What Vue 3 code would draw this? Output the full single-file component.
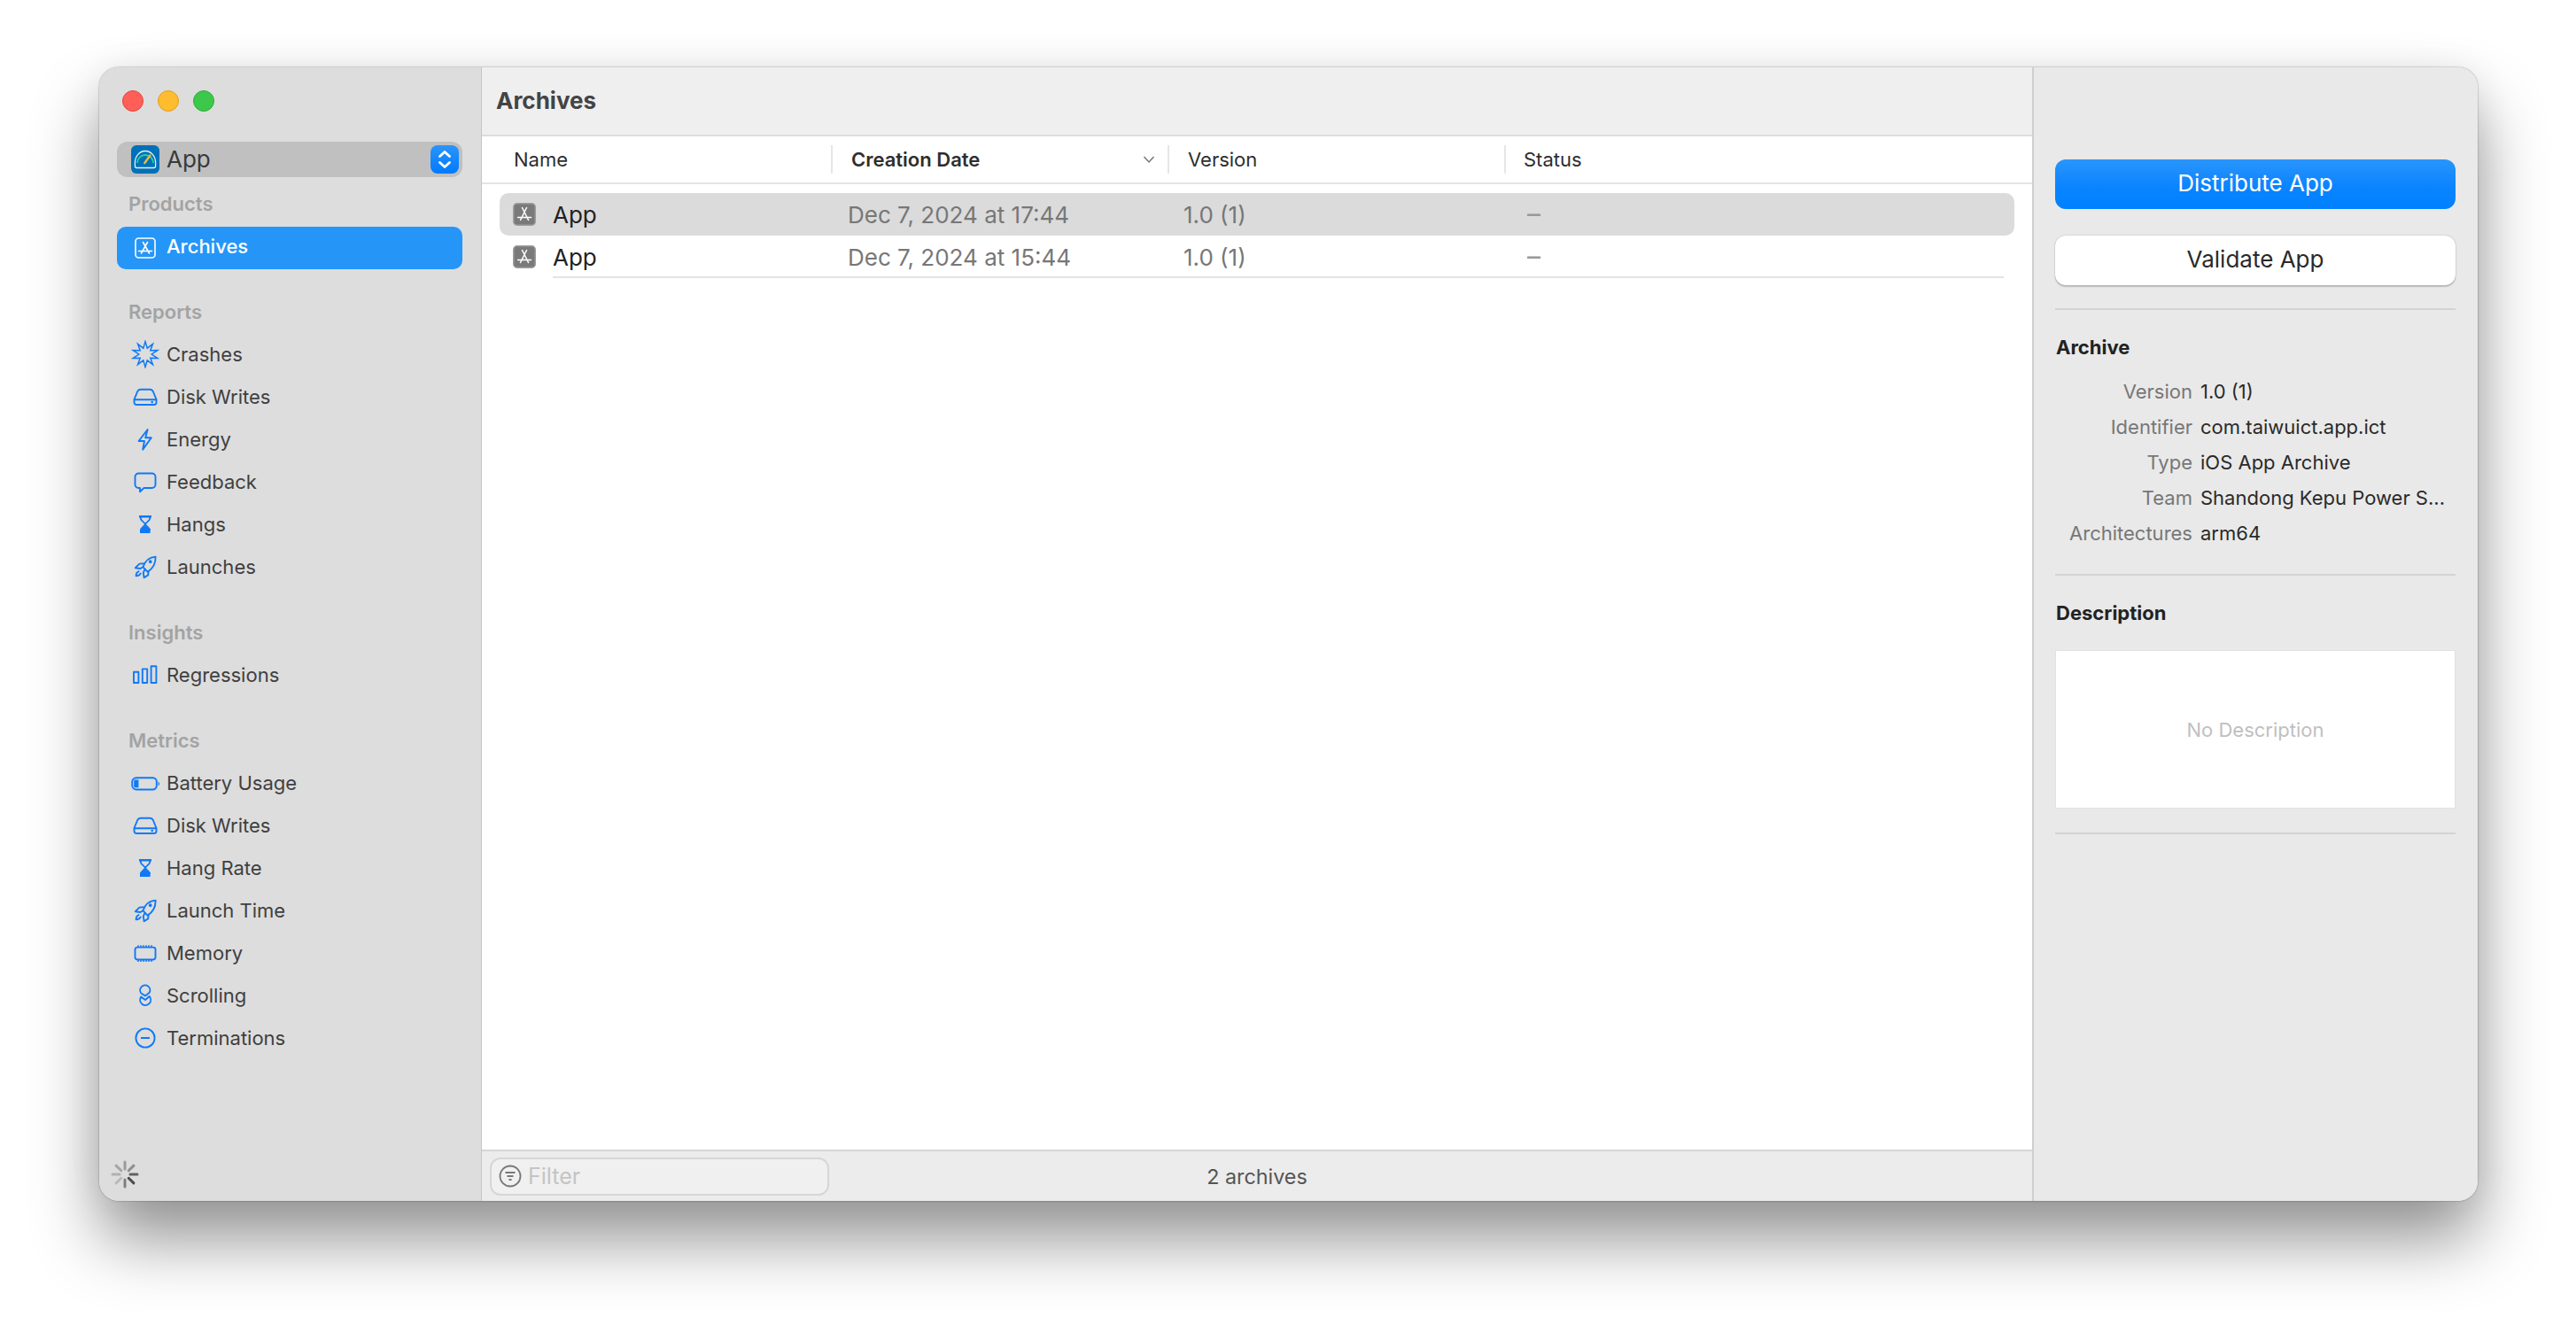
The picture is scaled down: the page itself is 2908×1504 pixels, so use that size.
<script setup>
const spikes = 10
const burst = Array.from({ length: spikes * 2 }, (_, i) => {
  const r = i % 2 ? 7.2 : 14.4
  const a = (Math.PI * i) / spikes - Math.PI / 2
  return `${(16 + r * Math.cos(a)).toFixed(2)},${(16 + r * Math.sin(a)).toFixed(2)}`
}).join(' ')

const icons = {
  crash: [{ d: `M${burst}Z`, slim: true }],
  disk: [
    { d: 'M3.5 19 7.2 10Q8.2 7.8 10.5 7.8H21.5Q23.8 7.8 24.8 10L28.5 19V22.2Q28.5 25 25.7 25H6.3Q3.5 25 3.5 22.2ZM3.5 19.2H28.5' },
    { d: 'M25 22a1.3 1.3 0 1 1-2.6 0a1.3 1.3 0 1 1 2.6 0Z', fill: true }
  ],
  bolt: [{ d: 'M18.6 5 8.6 18H15L13.2 27.6 22.8 14.2H16.2Z' }],
  bubble: [{ d: 'M8.5 6.5H23.5A4 4 0 0 1 27.5 10.5V19A4 4 0 0 1 23.5 23H14.5L10 27.2V23H8.5A4 4 0 0 1 4.5 19V10.5A4 4 0 0 1 8.5 6.5Z' }],
  hourglass: [
    { d: 'M9.5 7H22.5M10.8 7V9.5C10.8 12 15.8 14 15.8 16C15.8 18 10.8 20 10.8 23M21.2 7V9.5C21.2 12 16.2 14 16.2 16C16.2 18 21.2 20 21.2 23' },
    { d: 'M9 6H23V8.4H9ZM16 17.5 21.6 22.5V26H10V22.5Z', fill: true }
  ],
  rocket: [
    { d: 'M27.6 4.6C27.8 12 24.6 18 18.6 21.6L13.4 16.2C15.8 9.6 20.6 5 27.6 4.6Z' },
    { d: 'M23.6 10.2a1.9 1.9 0 1 1-3.8 0a1.9 1.9 0 1 1 3.8 0Z', fill: true },
    { d: 'M14.6 12.2 9.4 12.6 4.8 17.2 10.4 18 13.2 16.4M19.6 20.8 19.2 25.4 14.6 28.2 13.8 22.6 15.4 19' },
    { d: 'M9.2 20.8Q5.6 22 5.6 26.2Q9.6 26.2 11 22.8' }
  ],
  bars: [{ d: 'M3 12.8H8.4V25H3ZM12.8 9.4H18.2V25H12.8ZM22.6 6.2H28.4V25H22.6Z' }],
  battery: [
    { d: 'M6 10.2H24.5A4.3 4.3 0 0 1 28.8 14.5V19.2A4.3 4.3 0 0 1 24.5 23.5H6A4.8 4.8 0 0 1 1.2 18.7V15A4.8 4.8 0 0 1 6 10.2Z' },
    { d: 'M4.5 12.6H8.4V21.2H4.5Q3.2 21.2 3.2 19.9V13.9Q3.2 12.6 4.5 12.6ZM30.6 14.4Q32 15 32 16.9T30.6 19.4Z', fill: true }
  ],
  memory: [
    { d: 'M7 9.6H25A2.5 2.5 0 0 1 27.5 12.1V21A2.5 2.5 0 0 1 25 23.5H7A2.5 2.5 0 0 1 4.5 21V12.1A2.5 2.5 0 0 1 7 9.6Z' },
    { d: 'M8 7.2V9.6M11 7.2V9.6M14 7.2V9.6M17 7.2V9.6M20 7.2V9.6M23 7.2V9.6M8 23.5V26M11 23.5V26M14 23.5V26M17 23.5V26M20 23.5V26M23 23.5V26', thin: true }
  ],
  scroll: [
    { d: 'M11.6 13.8A5.6 5.6 0 1 1 20.7 12.8L16 16.4Z' },
    { d: 'M11.2 17.6 16 21 20.6 17A6 6 0 1 1 11.2 17.6Z' }
  ],
  minus: [{ d: 'M26.6 16A10.6 10.6 0 1 1 5.4 16A10.6 10.6 0 1 1 26.6 16ZM11 16H21' }]
}

const sections = [
  { title: 'Reports', items: [['Crashes', 'crash'], ['Disk Writes', 'disk'], ['Energy', 'bolt'], ['Feedback', 'bubble'], ['Hangs', 'hourglass'], ['Launches', 'rocket']] },
  { title: 'Insights', items: [['Regressions', 'bars']] },
  { title: 'Metrics', items: [['Battery Usage', 'battery'], ['Disk Writes', 'disk'], ['Hang Rate', 'hourglass'], ['Launch Time', 'rocket'], ['Memory', 'memory'], ['Scrolling', 'scroll'], ['Terminations', 'minus']] }
]

const spokes = [
  { a: 0, o: 0.38 }, { a: 45, o: 0.45 }, { a: 90, o: 0.72 }, { a: 135, o: 0.85 },
  { a: 180, o: 0.55 }, { a: 225, o: 0.2 }, { a: 270, o: 0.26 }, { a: 315, o: 0.32 }
]

const rows = [
  { date: 'Dec 7, 2024 at 17:44', selected: true },
  { date: 'Dec 7, 2024 at 15:44', selected: false }
]

const details = [
  ['Version', '1.0 (1)'],
  ['Identifier', 'com.taiwuict.app.ict'],
  ['Type', 'iOS App Archive'],
  ['Team', 'Shandong Kepu Power S...'],
  ['Architectures', 'arm64']
]
</script>

<template>
  <div class="page">
    <div class="window">
      <aside class="sidebar">
        <div class="lights">
          <span class="light red"></span>
          <span class="light yellow"></span>
          <span class="light green"></span>
        </div>
        <div class="picker">
          <svg class="app-icon" viewBox="0 0 32 32">
            <rect width="32" height="32" rx="6" fill="#0071b8" />
            <path d="M4.4 23.5V19.5A11.6 13 0 0 1 27.6 19.5V23.5Q27.6 25.5 25.6 25.5H6.4Q4.4 25.5 4.4 23.5Z" fill="none" stroke="#e6f2f8" stroke-width="1.3" />
            <path d="M7 20A9 9 0 0 1 25 20" fill="none" stroke="#22d39a" stroke-width="1.8" />
            <path d="M15.3 20 21.5 11.5" stroke="#f4b73a" stroke-width="2.4" stroke-linecap="round" />
          </svg>
          <span class="picker-label">App</span>
          <span class="stepper">
            <svg viewBox="0 0 32 32" width="32" height="32">
              <path d="M10.5 12.5 16 7.5 21.5 12.5M10.5 19.5 16 24.5 21.5 19.5" fill="none" stroke="#fff" stroke-width="2.8" stroke-linecap="round" stroke-linejoin="round" />
            </svg>
          </span>
        </div>

        <div class="heading first">Products</div>
        <div class="item active">
          <svg class="icon" viewBox="0 0 32 32">
            <rect x="5" y="5" width="22" height="22" rx="3.5" fill="none" stroke="#fff" stroke-width="1.6" />
            <path d="M13.5 9.5 20.5 22M18.5 9.5 11.5 22M8.5 19.5H23.5" fill="none" stroke="#fff" stroke-width="1.6" stroke-linecap="round" />
          </svg>
          <span class="active-label">Archives</span>
        </div>

        <section v-for="section in sections" :key="section.title" class="section">
          <div class="heading">{{ section.title }}</div>
          <div v-for="[label, icon] in section.items" :key="label" class="item">
            <svg class="icon" viewBox="0 0 32 32">
              <path
                v-for="(part, i) in icons[icon]"
                :key="i"
                :d="part.d"
                :class="part.fill ? 'ic-fill' : part.thin || part.slim ? 'ic-thin' : 'ic-line'"
              />
            </svg>
            <span>{{ label }}</span>
          </div>
        </section>

        <div class="spinner-wrap">
          <svg class="spinner" viewBox="0 0 32 32">
            <line
              v-for="s in spokes"
              :key="s.a"
              x1="16" y1="2" x2="16" y2="10"
              stroke="#333"
              stroke-width="3"
              stroke-linecap="round"
              :opacity="s.o"
              :transform="`rotate(${s.a} 16 16)`"
            />
          </svg>
        </div>
      </aside>

      <main class="main">
        <header class="title-bar">Archives</header>
        <div class="table">
          <div class="thead">
            <div class="th name">Name</div>
            <div class="th date">
              <span>Creation Date</span>
              <svg class="sort" viewBox="0 0 14 10" width="14" height="10">
                <path d="M1.5 2 7 8 12.5 2" fill="none" stroke="#777" stroke-width="1.5" />
              </svg>
            </div>
            <div class="th">Version</div>
            <div class="th status">Status</div>
          </div>
          <div class="rows">
            <div v-for="row in rows" :key="row.date" class="row" :class="{ selected: row.selected }">
              <div class="cell-name">
                <svg class="archive-icon" viewBox="0 0 26 26">
                  <rect x="0.75" y="0.75" width="24.5" height="24.5" rx="4" fill="#7a7a7a" stroke="#9d9d9d" stroke-width="1.5" />
                  <path d="M10.5 5.5 17.5 19.5M15.5 5.5 8.5 19.5M5.5 16.5H20.5" fill="none" stroke="#fff" stroke-width="1.5" stroke-linecap="round" />
                </svg>
                <span>App</span>
              </div>
              <div class="cell-date">{{ row.date }}</div>
              <div class="cell-version">1.0 (1)</div>
              <div class="cell-status">–</div>
            </div>
            <div class="row-line"></div>
          </div>
        </div>
        <footer class="footer">
          <div class="filter">
            <svg class="filter-icon" viewBox="0 0 26 26">
              <circle cx="13" cy="13" r="11.5" fill="none" stroke="#777" stroke-width="1.8" />
              <path d="M7.5 9H18.5M9.5 13H16.5M11.5 17H14.5" stroke="#777" stroke-width="1.8" fill="none" />
            </svg>
            <span>Filter</span>
          </div>
          <div class="count">2 archives</div>
        </footer>
      </main>

      <aside class="inspector">
        <button class="btn primary">Distribute App</button>
        <button class="btn secondary">Validate App</button>
        <div class="rule first-rule"></div>
        <h3 class="ins-title">Archive</h3>
        <dl class="details">
          <div v-for="[k, v] in details" :key="k" class="detail">
            <dt>{{ k }}</dt>
            <dd>{{ v }}</dd>
          </div>
        </dl>
        <div class="rule"></div>
        <h3 class="ins-title">Description</h3>
        <div class="desc">No Description</div>
        <div class="rule last-rule"></div>
      </aside>
    </div>
  </div>
</template>

<style>
html, body { margin: 0; background: #fff; }
</style>

<style scoped>
.page {
  width: 2908px;
  height: 1504px;
  padding: 76px 0 0 112px;
  box-sizing: border-box;
  background: #fff;
  overflow: hidden;
  font-family: Inter, "Liberation Sans", sans-serif;
}
.window {
  width: 2685px;
  height: 1280px;
  display: flex;
  border-radius: 22px;
  overflow: hidden;
  box-shadow: 0 0 1.5px rgba(0, 0, 0, 0.6), 0 44px 76px rgba(0, 0, 0, 0.42), 0 0 40px rgba(0, 0, 0, 0.06);
}

/* Sidebar */
.sidebar {
  width: 432px;
  flex: none;
  box-sizing: border-box;
  padding: 26px 21px 0 20px;
  background: #dddddd;
  border-right: 1px solid #c6c6c6;
  display: flex;
  flex-direction: column;
}
.lights { display: flex; gap: 16px; padding-left: 6px; }
.light { width: 24px; height: 24px; border-radius: 50%; box-sizing: border-box; }
.red { background: #ff5f57; border: 1px solid #e2463f; }
.yellow { background: #febc2e; border: 1px solid #dfa023; }
.green { background: #3cc84a; border: 1px solid #2eae3a; }
.picker {
  margin-top: 34px;
  height: 40px;
  border-radius: 12px;
  background: #c0c0c0;
  display: flex;
  align-items: center;
  padding: 0 4px 0 16px;
}
.app-icon { width: 32px; height: 32px; flex: none; }
.picker-label { margin: 0 0 2px 8px; font-size: 26px; color: #3a3a3a; flex: 1; }
.stepper {
  width: 32px;
  height: 32px;
  flex: none;
  border-radius: 8px;
  background: linear-gradient(#2a95fb, #007aff);
}
.stepper svg { display: block; }
.heading {
  height: 48px;
  line-height: 48px;
  padding-left: 13px;
  font-size: 22px;
  font-weight: 600;
  color: #a3a3a3;
}
.heading.first { margin-top: 6px; margin-bottom: 2px; }
.section { margin-top: 26px; }
.heading.first + .item + .section { margin-top: 24px; }
.item {
  height: 48px;
  display: flex;
  align-items: center;
  gap: 8px;
  padding-left: 16px;
  font-size: 22px;
  color: #404040;
  border-radius: 10px;
}
.item.active { background: #2596f8; color: #fff; font-weight: 500; }
.active-label { margin-bottom: 4px; }
.icon { width: 32px; height: 32px; flex: none; }
.ic-line { fill: none; stroke: #1079f6; stroke-width: 1.9; stroke-linejoin: round; }
.ic-fill { fill: #1079f6; stroke: none; }
.ic-thin { fill: none; stroke: #1079f6; stroke-width: 1.5; }
.spinner-wrap { margin-top: auto; height: 32px; margin-bottom: 14px; }
.spinner { width: 32px; height: 32px; margin-left: -7px; display: block; }

/* Main */
.main { flex: 1; display: flex; flex-direction: column; min-width: 0; background: #fff; }
.title-bar {
  height: 78px;
  box-sizing: border-box;
  padding-left: 16px;
  line-height: 76px;
  background: #efefef;
  border-bottom: 2px solid #dddddd;
  font-size: 26px;
  font-weight: 700;
  color: #444;
}
.table { flex: 1; min-height: 0; }
.thead {
  height: 54px;
  box-sizing: border-box;
  display: grid;
  grid-template-columns: 394px 380px 380px 1fr;
  align-items: center;
  border-bottom: 2px solid #e4e4e4;
}
.th {
  height: 32px;
  line-height: 32px;
  box-sizing: border-box;
  padding-left: 21px;
  font-size: 22px;
  color: #2e2e2e;
  border-left: 2px solid #e6e6e6;
}
.th.name { border-left: none; padding-left: 36px; }
.th.status { padding-left: 20px; }
.th.date { font-weight: 600; display: flex; align-items: center; justify-content: space-between; padding-right: 14px; }
.rows { padding: 10px 20px 0; }
.row {
  height: 48px;
  display: grid;
  grid-template-columns: 393px 379px 388px 1fr;
  align-items: center;
  border-radius: 10px;
  font-size: 26px;
  color: #777;
}
.row.selected { background: #dbdbdb; }
.cell-name { display: flex; align-items: center; gap: 19px; padding-left: 15px; color: #222; }
.archive-icon { width: 26px; height: 26px; flex: none; }
.cell-status { color: #999; font-size: 30px; margin-top: -2px; }
.row-line { height: 2px; margin: -2px 12px 0 60px; background: #e4e4e4; }

/* Footer */
.footer {
  height: 58px;
  box-sizing: border-box;
  position: relative;
  display: flex;
  align-items: center;
  padding-left: 9px;
  background: #ececec;
  border-top: 2px solid #d6d6d6;
}
.filter {
  width: 383px;
  height: 43px;
  box-sizing: border-box;
  display: flex;
  align-items: center;
  gap: 7px;
  padding-left: 8px;
  border: 2px solid #d6d6d6;
  border-radius: 12px;
  background: #f0f0f0;
  font-size: 25px;
  color: #c4c4c4;
}
.filter-icon { width: 26px; height: 26px; flex: none; }
.count {
  position: absolute;
  inset: 0;
  display: flex;
  align-items: center;
  justify-content: center;
  font-size: 23.3px;
  color: #555;
}

/* Inspector */
.inspector {
  width: 503px;
  flex: none;
  box-sizing: border-box;
  padding: 104px 25px 0 24px;
  background: #e9e9e9;
  border-left: 2px solid #cfcfcf;
  display: flex;
  flex-direction: column;
}
.btn {
  height: 56px;
  border: none;
  padding: 0 0 3px;
  border-radius: 12px;
  font-family: inherit;
  font-size: 26px;
  flex: none;
}
.primary { background: linear-gradient(#2a95fb, #0a84ff 55%, #0081ff); color: #fff; }
.secondary {
  margin-top: 30px;
  background: #fff;
  color: #2a2a2a;
  box-shadow: 0 0 1.5px rgba(0, 0, 0, 0.3), 0 1.5px 1.5px rgba(0, 0, 0, 0.18);
}
.rule { height: 2px; background: #d3d3d3; flex: none; }
.first-rule { margin-top: 26px; }
.ins-title {
  margin: 29px 0 0 1px;
  height: 26px;
  line-height: 26px;
  font-size: 22px;
  font-weight: 700;
  color: #222;
}
.details { margin: 17px 0 0; }
.detail {
  height: 40px;
  display: grid;
  grid-template-columns: 155px 1fr;
  column-gap: 9px;
  align-items: center;
  font-size: 22px;
}
.detail dt { text-align: right; color: #777; }
.detail dd { margin: 0; color: #2a2a2a; white-space: nowrap; }
.details + .rule { margin-top: 26px; }
.desc {
  margin: 30px 1px 0;
  height: 177px;
  background: #fff;
  box-shadow: 0 0 0 1px #e2e2e2;
  display: flex;
  align-items: center;
  justify-content: center;
  font-size: 22px;
  color: #c0c0c0;
}
.last-rule { margin-top: 28px; }
</style>
